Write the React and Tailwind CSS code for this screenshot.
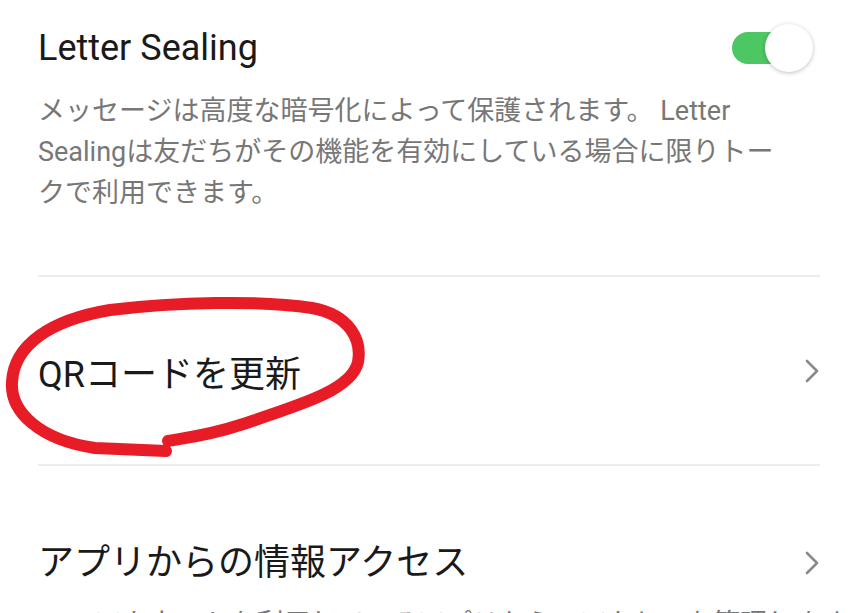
import React from "react";

const font = { fontFamily: 'Roboto, "Noto Sans CJK JP", sans-serif' };

function Chevron() {
  return (
    <svg width="16" height="24" viewBox="0 0 16 24" fill="none" className="shrink-0">
      <path d="M3 2 L13 12 L3 22" stroke="#8a8a8a" strokeWidth="2.6" strokeLinecap="round" strokeLinejoin="round" />
    </svg>
  );
}

function Toggle() {
  return (
    <div className="relative w-[81px] h-[48px] mr-[7px] shrink-0">
      <div className="absolute left-0 top-[8px] w-[68px] h-[32px] rounded-full bg-[#4cc764]" />
      <div className="absolute right-0 top-0 w-[48px] h-[48px] rounded-full bg-white shadow-[0_1px_4px_rgba(0,0,0,0.25)]" />
    </div>
  );
}

export default function App() {
  return (
    <div className="relative w-[858px] h-[613px] overflow-hidden bg-white" style={font}>
      <div className="px-[38px]">
        {/* Letter Sealing */}
        <section className="pt-[24px]">
          <div className="flex items-center justify-between">
            <h2 className="text-[36px] leading-[44px] text-[#1a1a1a]">Letter Sealing</h2>
            <Toggle />
          </div>
          <p className="mt-[19px] text-[27px] leading-[41px] text-[#777777] whitespace-nowrap">
            メッセージは高度な暗号化によって保護されます。 Letter
            <br />
            Sealingは友だちがその機能を有効にしている場合に限りトー
            <br />
            クで利用できます。
          </p>
        </section>

        <div className="mt-[61px] h-[2px] bg-[#ededed]" />

        {/* QR code */}
        <div className="h-[187px] flex items-center justify-between">
          <span className="text-[36px] leading-[44px] text-[#1a1a1a] pt-[8px]">QRコードを更新</span>
          <Chevron />
        </div>

        <div className="h-[2px] bg-[#ededed]" />

        {/* App access */}
        <section className="pt-[75px]">
          <div className="flex items-center justify-between">
            <span className="text-[36px] leading-[44px] text-[#1a1a1a]">アプリからの情報アクセス</span>
            <Chevron />
          </div>
          <p className="mt-[19px] text-[27px] leading-[41px] text-[#777777] whitespace-nowrap">
            LINEアカウントを利用しているアプリからのアクセスを管理します。
          </p>
        </section>
      </div>

      {/* red hand-drawn annotation */}
      <svg className="absolute inset-0 pointer-events-none" width="858" height="613" viewBox="0 0 858 613" fill="none">
        <path
          d="M166 451 L95 448 C40 440 10 412 12 382 C14 345 50 320 110 310 C175 302 260 300 312 308 C350 315 362 340 358 362 C352 390 300 405 240 425 C210 435 185 438 168 441"
          stroke="#e81c26"
          strokeWidth="12"
          strokeLinecap="round"
          strokeLinejoin="round"
        />
      </svg>
    </div>
  );
}
